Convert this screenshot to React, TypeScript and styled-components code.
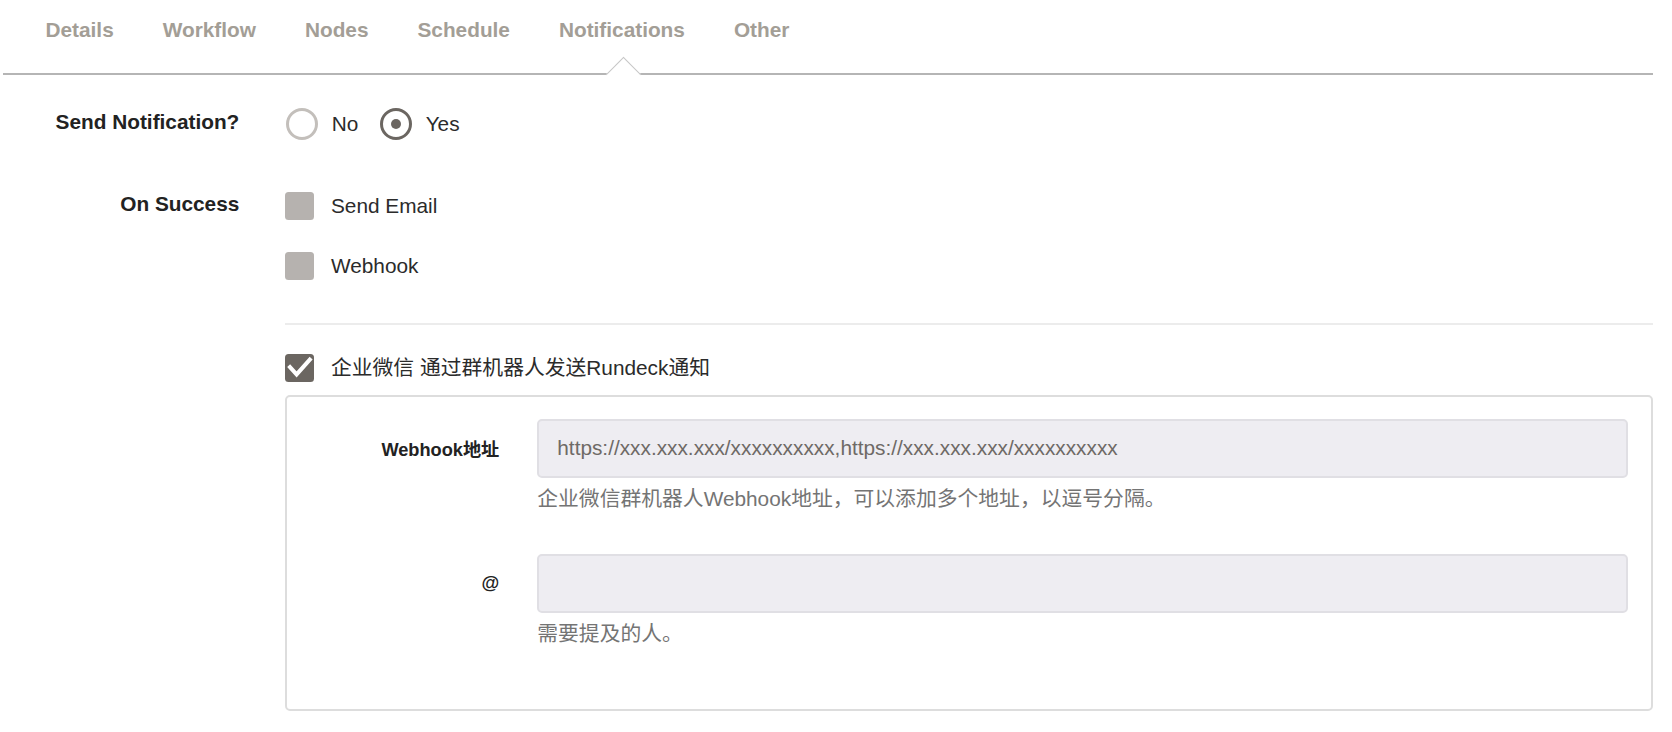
import React from "react";
import styled, { createGlobalStyle, css } from "styled-components";

const GlobalStyle = createGlobalStyle`
  html, body {
    margin: 0;
    padding: 0;
    background: #ffffff;
  }
  body {
    font-family: "Liberation Sans", "Noto Sans CJK SC", Arial, sans-serif;
    font-size: 20.8px;
    color: #2b2b2b;
  }
  * { box-sizing: border-box; }
`;

const Page = styled.div`
  width: 1653px;
  padding-left: 3px;
`;

const TabBar = styled.nav`
  display: flex;
  height: 75px;
  padding-left: 18px;
  border-bottom: 2px solid #b5b5b5;
`;

const Tab = styled.div<{ $active?: boolean }>`
  position: relative;
  padding: 17.5px 24.5px 0;
  font-weight: 700;
  font-size: 20.8px;
  line-height: 24px;
  color: #a39e96;
  white-space: nowrap;
  ${(p) =>
    p.$active &&
    css`
      &::after {
        content: "";
        position: absolute;
        left: calc(50% - 11px);
        top: 61.5px;
        width: 24px;
        height: 24px;
        background: #ffffff;
        border-top: 1px solid #c6c6c6;
        border-left: 1px solid #c6c6c6;
        transform: rotate(45deg);
      }
    `}
`;

const Form = styled.div`
  display: flex;
  flex-direction: column;
`;

const FormRow = styled.div<{ $top: number; $align: string }>`
  display: flex;
  align-items: ${(p) => p.$align};
  margin-top: ${(p) => p.$top}px;
`;

const RowLabel = styled.div<{ $lh: number; $lift?: number }>`
  width: 236.3px;
  margin-right: 45.7px;
  margin-bottom: ${(p) => p.$lift ?? 0}px;
  flex: none;
  text-align: right;
  font-weight: 700;
  font-size: 20.8px;
  line-height: ${(p) => p.$lh}px;
  color: #222222;
`;

const Controls = styled.div`
  flex: 1;
  display: flex;
  flex-direction: column;
`;

const RadioGroup = styled.div`
  display: flex;
  align-items: center;
  height: 32.4px;
`;

const RadioOption = styled.label`
  display: flex;
  align-items: center;
  margin-right: 20.7px;
  font-size: 20.8px;
  color: #2b2b2b;
  line-height: 24px;
`;

const RadioCircle = styled.span<{ $checked?: boolean }>`
  width: 32.4px;
  height: 32.4px;
  border-radius: 50%;
  margin-right: 13.3px;
  margin-left: 1px;
  border: ${(p) => (p.$checked ? "3.5px solid #6b6661" : "3px solid #c3bfbb")};
  display: flex;
  align-items: center;
  justify-content: center;
  &::after {
    content: "";
    display: ${(p) => (p.$checked ? "block" : "none")};
    width: 10px;
    height: 10px;
    border-radius: 50%;
    background: #6b6661;
  }
`;

const CheckOption = styled.label<{ $gapAfter?: number }>`
  display: flex;
  align-items: center;
  height: 28px;
  gap: 17px;
  font-size: 20.8px;
  line-height: 24px;
  color: #2b2b2b;
  margin-bottom: ${(p) => p.$gapAfter ?? 0}px;
`;

const CheckBox = styled.span<{ $checked?: boolean }>`
  width: 29px;
  height: 28px;
  border-radius: 3.5px;
  background: ${(p) => (p.$checked ? "#6b6661" : "#b6b2af")};
  flex: none;
  display: flex;
  align-items: center;
  justify-content: center;
`;

const Divider = styled.div`
  height: 2px;
  background: #ececec;
  margin-top: 42.7px;
  margin-bottom: 29.3px;
`;

const ConfigPanel = styled.div`
  margin-top: 12.3px;
  border: 2px solid #dddddd;
  border-radius: 5px;
  padding: 22px 22.7px 54px 0;
  display: flex;
  flex-direction: column;
  gap: 33.3px;
`;

const PanelRow = styled.div`
  display: grid;
  grid-template-columns: 212.3px 1fr;
  column-gap: 38px;
  align-items: start;
`;

const PanelLabel = styled.div`
  height: 59px;
  display: flex;
  align-items: center;
  justify-content: flex-end;
  font-weight: 700;
  font-size: 18.2px;
  color: #222222;
`;

const PanelField = styled.div`
  display: flex;
  flex-direction: column;
`;

const TextInput = styled.input`
  width: 100%;
  height: 59px;
  border: 2px solid #e0dfe4;
  border-radius: 5px;
  background: #eeedf2;
  padding: 0 18px;
  font-family: "Liberation Sans", "Noto Sans CJK SC", Arial, sans-serif;
  font-size: 20.8px;
  color: #6e6a66;
  outline: none;
`;

const Help = styled.div`
  margin: 6.5px 0;
  font-size: 20.8px;
  line-height: 29.7px;
  color: #747474;
`;

const CheckMark = () => (
  <svg width="29" height="28" viewBox="0 0 29 28">
    <path
      d="M5 13.2 L11.6 20.4 L24.8 5.6"
      fill="none"
      stroke="#ffffff"
      strokeWidth="4"
      strokeLinecap="square"
      strokeLinejoin="miter"
    />
  </svg>
);

const tabs = ["Details", "Workflow", "Nodes", "Schedule", "Notifications", "Other"];

export default function App() {
  return (
    <>
      <GlobalStyle />
      <Page>
        <TabBar>
          {tabs.map((t) => (
            <Tab key={t} $active={t === "Notifications"}>
              {t}
            </Tab>
          ))}
        </TabBar>
        <Form>
          <FormRow $top={32.5} $align="center">
            <RowLabel $lh={24} $lift={4}>
              Send Notification?
            </RowLabel>
            <Controls>
              <RadioGroup>
                <RadioOption>
                  <RadioCircle />
                  No
                </RadioOption>
                <RadioOption>
                  <RadioCircle $checked />
                  Yes
                </RadioOption>
              </RadioGroup>
            </Controls>
          </FormRow>
          <FormRow $top={52.5} $align="flex-start">
            <RowLabel $lh={23}>On Success</RowLabel>
            <Controls>
              <CheckOption $gapAfter={32}>
                <CheckBox />
                Send Email
              </CheckOption>
              <CheckOption>
                <CheckBox />
                Webhook
              </CheckOption>
              <Divider />
              <CheckOption>
                <CheckBox $checked>
                  <CheckMark />
                </CheckBox>
                企业微信 通过群机器人发送Rundeck通知
              </CheckOption>
              <ConfigPanel>
                <PanelRow>
                  <PanelLabel>Webhook地址</PanelLabel>
                  <PanelField>
                    <TextInput
                      readOnly
                      value="https://xxx.xxx.xxx/xxxxxxxxxx,https://xxx.xxx.xxx/xxxxxxxxxx"
                    />
                    <Help>企业微信群机器人Webhook地址，可以添加多个地址，以逗号分隔。</Help>
                  </PanelField>
                </PanelRow>
                <PanelRow>
                  <PanelLabel>@</PanelLabel>
                  <PanelField>
                    <TextInput readOnly value="" />
                    <Help>需要提及的人。</Help>
                  </PanelField>
                </PanelRow>
              </ConfigPanel>
            </Controls>
          </FormRow>
        </Form>
      </Page>
    </>
  );
}
